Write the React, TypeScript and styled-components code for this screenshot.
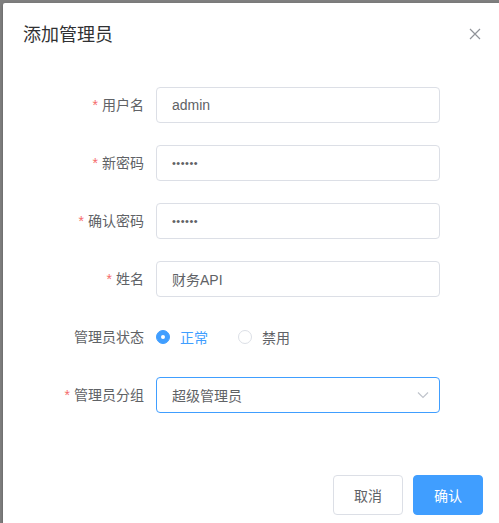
import { FC } from 'react'
import styled, { createGlobalStyle } from 'styled-components'

const GlobalStyle = createGlobalStyle`
  html, body {
    margin: 0;
    padding: 0;
    background: #7f7f7f;
    overflow: hidden;
    font-family: "Liberation Sans", "Noto Sans CJK SC", sans-serif;
  }
`

const Page = styled.div`
  width: 499px;
  height: 523px;
  padding: 3px 0 0 3px;
  box-sizing: border-box;
  overflow: hidden;
`

const Dialog = styled.div`
  width: 500px;
  background: #fff;
  border-radius: 2px;
  box-shadow: 0 1px 3px rgba(0, 0, 0, 0.3);
`

const Header = styled.div`
  position: relative;
  padding: 20px 20px 10px;
`

const Title = styled.span`
  display: block;
  font-size: 18px;
  line-height: 24px;
  color: #303133;
`

const CloseButton = styled.button`
  position: absolute;
  top: 23px;
  right: 20px;
  width: 16px;
  height: 16px;
  padding: 0;
  border: none;
  background: transparent;
  display: flex;
  align-items: center;
  justify-content: center;
  cursor: pointer;
`

const Body = styled.div`
  padding: 30px 20px;
`

const FormItem = styled.div`
  display: flex;
  align-items: center;
  height: 36px;
  margin-bottom: 22px;
`

const Label = styled.label<{ $required?: boolean }>`
  width: 133px;
  box-sizing: border-box;
  padding-right: 12px;
  text-align: right;
  font-size: 14px;
  color: #606266;
  line-height: 36px;
  &::before {
    content: ${(p) => (p.$required ? '"*"' : 'none')};
    color: #f56c6c;
    margin-right: 4px;
  }
`

const Field = styled.div`
  width: 284px;
  position: relative;
`

const Input = styled.input<{ $focused?: boolean }>`
  width: 100%;
  height: 36px;
  box-sizing: border-box;
  padding: 0 15px;
  border: 1px solid ${(p) => (p.$focused ? '#409eff' : '#dcdfe6')};
  border-radius: 4px;
  font-family: inherit;
  font-size: 14px;
  color: #606266;
  outline: none;
  background: #fff;
  cursor: ${(p) => (p.$focused ? 'pointer' : 'text')};
  &[type='password'] {
    font-size: 11px;
    letter-spacing: 0.5px;
  }
`

const Arrow = styled.span`
  position: absolute;
  right: 5px;
  top: 0;
  width: 25px;
  height: 36px;
  display: flex;
  align-items: center;
  justify-content: center;
`

const RadioGroup = styled.div`
  display: flex;
  align-items: center;
`

const Radio = styled.label<{ $checked?: boolean }>`
  display: flex;
  align-items: center;
  margin-right: 30px;
  font-size: 14px;
  color: ${(p) => (p.$checked ? '#409eff' : '#606266')};
  cursor: pointer;
`

const RadioDot = styled.span<{ $checked?: boolean }>`
  width: 14px;
  height: 14px;
  box-sizing: border-box;
  border-radius: 50%;
  border: 1px solid ${(p) => (p.$checked ? '#409eff' : '#dcdfe6')};
  background: ${(p) => (p.$checked ? '#409eff' : '#fff')};
  margin-right: 10px;
  display: flex;
  align-items: center;
  justify-content: center;
  &::after {
    content: '';
    width: 4px;
    height: 4px;
    border-radius: 50%;
    background: #fff;
    display: ${(p) => (p.$checked ? 'block' : 'none')};
  }
`

const Footer = styled.div`
  padding: 10px 20px 20px;
  display: flex;
  justify-content: flex-end;
  gap: 10px;
`

const Button = styled.button<{ $primary?: boolean }>`
  height: 40px;
  padding: 0 20px;
  border-radius: 4px;
  font-family: inherit;
  font-size: 14px;
  border: 1px solid ${(p) => (p.$primary ? '#409eff' : '#dcdfe6')};
  background: ${(p) => (p.$primary ? '#409eff' : '#fff')};
  color: ${(p) => (p.$primary ? '#fff' : '#606266')};
  cursor: pointer;
`

const App: FC = () => {
  return (
    <>
      <GlobalStyle />
      <Page>
        <Dialog>
          <Header>
            <Title>添加管理员</Title>
            <CloseButton aria-label="close">
              <svg width="12" height="12" viewBox="0 0 12 12">
                <path d="M1 1L11 11M11 1L1 11" stroke="#909399" strokeWidth="1.2" fill="none" />
              </svg>
            </CloseButton>
          </Header>
          <Body>
            <FormItem>
              <Label $required>用户名</Label>
              <Field>
                <Input defaultValue="admin" />
              </Field>
            </FormItem>
            <FormItem>
              <Label $required>新密码</Label>
              <Field>
                <Input type="password" defaultValue="123456" />
              </Field>
            </FormItem>
            <FormItem>
              <Label $required>确认密码</Label>
              <Field>
                <Input type="password" defaultValue="123456" />
              </Field>
            </FormItem>
            <FormItem>
              <Label $required>姓名</Label>
              <Field>
                <Input defaultValue="财务API" />
              </Field>
            </FormItem>
            <FormItem>
              <Label>管理员状态</Label>
              <RadioGroup>
                <Radio $checked>
                  <RadioDot $checked />
                  正常
                </Radio>
                <Radio>
                  <RadioDot />
                  禁用
                </Radio>
              </RadioGroup>
            </FormItem>
            <FormItem>
              <Label $required>管理员分组</Label>
              <Field>
                <Input $focused readOnly value="超级管理员" />
                <Arrow>
                  <svg width="12" height="8" viewBox="0 0 12 8">
                    <path d="M1 1.5L6 6.5L11 1.5" stroke="#c0c4cc" strokeWidth="1.2" fill="none" />
                  </svg>
                </Arrow>
              </Field>
            </FormItem>
          </Body>
          <Footer>
            <Button>取消</Button>
            <Button $primary>确认</Button>
          </Footer>
        </Dialog>
      </Page>
    </>
  )
}

export default App
